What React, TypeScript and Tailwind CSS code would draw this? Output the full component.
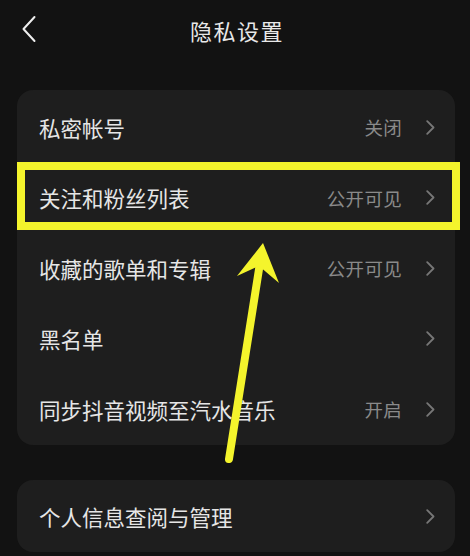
import type { JSX } from 'react';

type Row = { label: string; value?: string };

const rows: Row[] = [
  { label: '私密帐号', value: '关闭' },
  { label: '关注和粉丝列表', value: '公开可见' },
  { label: '收藏的歌单和专辑', value: '公开可见' },
  { label: '黑名单' },
  { label: '同步抖音视频至汽水音乐', value: '开启' },
];

function Chevron(): JSX.Element {
  return (
    <svg width="9" height="15" viewBox="0 0 9 15" fill="none" className="shrink-0">
      <path d="M1.2 1.2 L7.5 7.5 L1.2 13.8" stroke="#777777" strokeWidth="1.8" strokeLinecap="round" strokeLinejoin="round" />
    </svg>
  );
}

function SettingRow({ label, value }: Row): JSX.Element {
  return (
    <div className="flex h-[70.5px] items-center pl-[22px] pr-[20px]">
      <span className="flex-1 text-[21.5px] leading-none text-[#e6e6e6]">{label}</span>
      {value && (
        <span className="mr-[24px] text-[18.5px] leading-none tracking-[0.3px] text-[#8a8a8a]">{value}</span>
      )}
      <Chevron />
    </div>
  );
}

export default function App(): JSX.Element {
  return (
    <div
      className="relative h-[556px] w-[470px] overflow-hidden bg-[#121212]"
      style={{ fontFamily: '"Noto Sans CJK SC", "Noto Sans", sans-serif' }}
    >
      <header className="relative flex h-[60px] items-center justify-center">
        <svg width="16" height="28" viewBox="0 0 16 28" fill="none" className="absolute left-[21px] top-[15px]">
          <path d="M13.5 2 L2.5 14 L13.5 26" stroke="#eeeeee" strokeWidth="2" strokeLinecap="round" strokeLinejoin="round" />
        </svg>
        <h1 className="pl-[4px] text-[22px] leading-none tracking-[1.5px] text-[#e8e8e8]">隐私设置</h1>
      </header>

      <div className="mx-[17px] mt-[30px] w-[438px] rounded-[16px] bg-[#1e1e1e] pt-[2px]">
        {rows.map((r) => (
          <SettingRow key={r.label} {...r} />
        ))}
      </div>

      <div className="mx-[17px] mt-[35px] w-[438px] rounded-[16px] bg-[#1e1e1e] pt-[2px]">
        <SettingRow label="个人信息查阅与管理" />
      </div>

      {/* annotation overlay */}
      <div className="absolute left-[17px] top-[162px] h-[68px] w-[443px] border-[8px] border-[#f4f42c]" />
      <svg className="pointer-events-none absolute left-0 top-0" width="470" height="556" viewBox="0 0 470 556">
        <line x1="229" y1="459" x2="259.5" y2="266" stroke="#f4f42c" strokeWidth="8" strokeLinecap="round" />
        <polygon points="263,243 237,276 259,266 279,283" fill="#f4f42c" />
      </svg>
    </div>
  );
}
